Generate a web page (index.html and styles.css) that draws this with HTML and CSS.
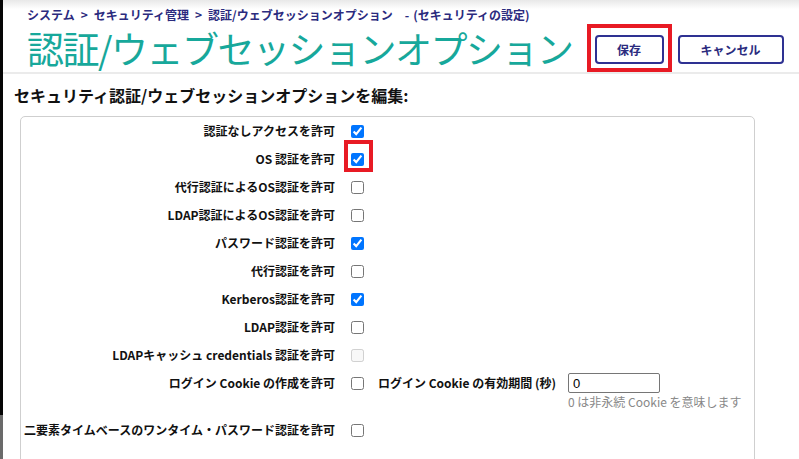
FILE: index.html
```html
<!DOCTYPE html>
<html lang="ja">
<head>
    <meta charset="UTF-8">
    <title>認証/ウェブセッションオプション</title>
    <link rel="stylesheet" href="styles.css">
</head>
<body>
    <div class="edge"></div>

    <div class="page">
        <header class="header">
            <div class="crumbs">
                システム<span class="sep">&gt;</span>セキュリティ管理<span class="sep">&gt;</span>認証/ウェブセッションオプション<span class="dash">-</span>(セキュリティの設定)
            </div>
            <div class="title-row">
                <h1>認証/ウェブセッションオプション</h1>
                <span class="save-mark"><button class="btn">保存</button></span>
                <button class="btn btn-cancel">キャンセル</button>
            </div>
        </header>

        <h2>セキュリティ認証/ウェブセッションオプションを編集:</h2>

        <div class="box">
            <div class="row">
                <div class="label">認証なしアクセスを許可</div>
                <div class="field"><span class="check"><input type="checkbox" checked></span></div>
            </div>
            <div class="row">
                <div class="label">OS 認証を許可</div>
                <div class="field"><span class="check"><input type="checkbox" checked><span class="mark"></span></span></div>
            </div>
            <div class="row">
                <div class="label">代行認証によるOS認証を許可</div>
                <div class="field"><span class="check"><input type="checkbox"></span></div>
            </div>
            <div class="row">
                <div class="label">LDAP認証によるOS認証を許可</div>
                <div class="field"><span class="check"><input type="checkbox"></span></div>
            </div>
            <div class="row">
                <div class="label">パスワード認証を許可</div>
                <div class="field"><span class="check"><input type="checkbox" checked></span></div>
            </div>
            <div class="row">
                <div class="label">代行認証を許可</div>
                <div class="field"><span class="check"><input type="checkbox"></span></div>
            </div>
            <div class="row">
                <div class="label">Kerberos認証を許可</div>
                <div class="field"><span class="check"><input type="checkbox" checked></span></div>
            </div>
            <div class="row">
                <div class="label">LDAP認証を許可</div>
                <div class="field"><span class="check"><input type="checkbox"></span></div>
            </div>
            <div class="row">
                <div class="label">LDAPキャッシュ credentials 認証を許可</div>
                <div class="field"><span class="check"><input type="checkbox" disabled></span></div>
            </div>
            <div class="row row-cookie">
                <div class="label">ログイン Cookie の作成を許可</div>
                <div class="field">
                    <span class="check"><input type="checkbox"></span>
                    <span class="sub-label">ログイン Cookie の有効期間 (秒)</span>
                    <div class="input-group">
                        <input type="text" class="text-input" value="0">
                        <div class="hint">0 は非永続 Cookie を意味します</div>
                    </div>
                </div>
            </div>
            <div class="row">
                <div class="label">二要素タイムベースのワンタイム・パスワード認証を許可</div>
                <div class="field"><span class="check"><input type="checkbox"></span></div>
            </div>
        </div>
    </div>
</body>
</html>
```

FILE: styles.css
```css
body {
    margin: 0;
    display: flex;
    height: 100vh;
    overflow: hidden;
    font-family: "Noto Sans CJK JP", "Noto Sans", sans-serif;
    color: #111;
    background: #fff;
}
.edge {
    width: 3px;
    flex: none;
    background: linear-gradient(#050505 0, #050505 415px, #6a6a6a 415px);
}
.page {
    flex: 1;
}
.header {
    padding: 6px 0 0 24px;
    background: linear-gradient(#e8e8e8, #fff 9px);
    border-bottom: 2px solid #ebebeb;
}
.crumbs {
    font-size: 12px;
    font-weight: bold;
    line-height: 18px;
    color: #2b2b7e;
}
.crumbs .sep {
    margin: 0 6px;
}
.crumbs .dash {
    margin: 0 4px 0 12px;
}
.title-row {
    display: flex;
    align-items: center;
}
h1 {
    flex: none;
    margin: 0;
    font-size: 37px;
    font-weight: normal;
    line-height: 48px;
    letter-spacing: -1.5px;
    white-space: nowrap;
    color: #17a89b;
}
.save-mark {
    margin-left: 14px;
    padding: 7px 4px 4px 4px;
    border: 4px solid #e81a24;
}
.btn {
    display: block;
    width: 69px;
    height: 29px;
    padding: 0;
    background: #fff;
    border: 2px solid #2e3192;
    border-radius: 4px;
    font-family: inherit;
    font-size: 12px;
    font-weight: bold;
    color: #2b2b7e;
}
.btn-cancel {
    width: 106px;
    margin-left: 6px;
    align-self: flex-end;
    margin-bottom: 8px;
}
h2 {
    margin: 11px 0 0 11px;
    font-size: 16px;
    line-height: 20px;
    color: #111;
}
.box {
    box-sizing: border-box;
    width: 735px;
    margin: 11px 0 0 17px;
    padding-bottom: 30px;
    border: 1px solid #cfcfcf;
    border-radius: 5px;
}
.row {
    display: flex;
    align-items: flex-start;
}
.row .label {
    flex: none;
    width: 314px;
    text-align: right;
    font-size: 12px;
    font-weight: bold;
    line-height: 28px;
}
.field {
    display: flex;
    align-items: flex-start;
    margin-left: 16px;
}
.check {
    position: relative;
    height: 28px;
    display: flex;
    align-items: center;
}
.check input {
    margin: 0;
    width: 13px;
    height: 13px;
}
.mark {
    position: absolute;
    left: -7px;
    top: -5px;
    width: 29px;
    height: 32px;
    box-sizing: border-box;
    border: 4px solid #e81a24;
}
.row-cookie {
    padding-bottom: 6px;
}
.sub-label {
    margin-left: 14px;
    font-size: 12px;
    font-weight: bold;
    line-height: 28px;
}
.input-group {
    margin-left: 12px;
    padding-top: 4px;
}
.text-input {
    display: block;
    box-sizing: border-box;
    width: 92px;
    height: 20px;
    padding: 0 4px;
    border: 1px solid #767676;
    border-radius: 2px;
    font-family: "Liberation Sans", sans-serif;
    font-size: 13px;
    color: #000;
}
.hint {
    margin-top: 1px;
    font-size: 12px;
    line-height: 16px;
    color: #888;
}
```
